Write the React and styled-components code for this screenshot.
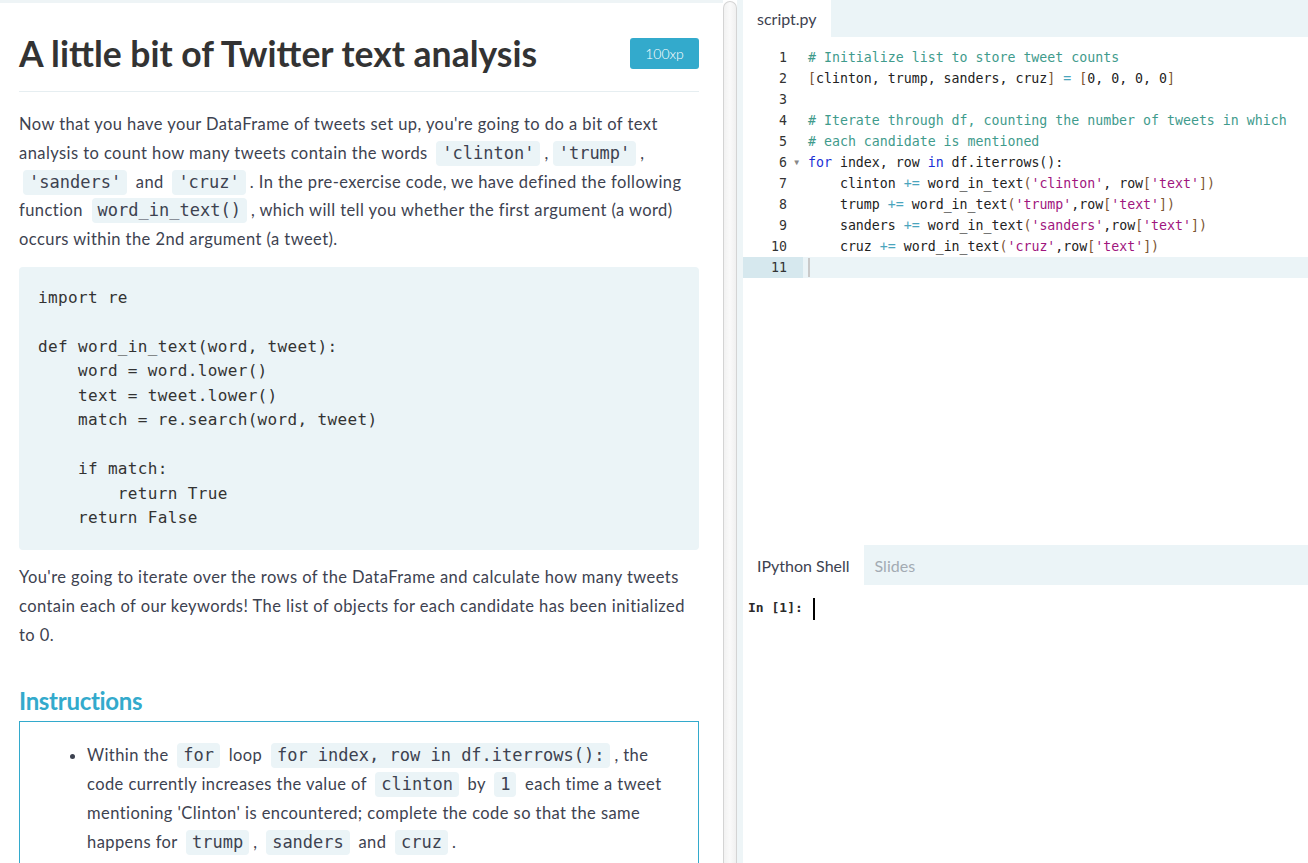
import React from "react";
import styled, { createGlobalStyle } from "styled-components";

const GlobalStyle = createGlobalStyle`
  html, body {
    margin: 0;
    padding: 0;
    overflow: hidden;
  }
  body {
    font-family: Lato, "Open Sans", sans-serif;
    color: #3d4250;
  }
`;

const Page = styled.div`
  display: flex;
  height: 863px;
  width: 1308px;
  overflow: hidden;
  background: #fff;
`;

const LeftPane = styled.div`
  flex: none;
  width: 723px;
  box-sizing: border-box;
  padding: 0 24px 0 19px;
  border-top: 3px solid #eef4f6;
  overflow: hidden;
`;

const HeaderRow = styled.div`
  display: flex;
  align-items: center;
  justify-content: space-between;
  height: 76px;
  padding-top: 12px;
  border-bottom: 1px solid #e6eef1;
`;

const Title = styled.h1`
  margin: 0;
  font-family: Lato, sans-serif;
  font-weight: 700;
  font-size: 35.5px;
  letter-spacing: 0;
  color: #333;
`;

const Badge = styled.span`
  display: inline-flex;
  align-items: center;
  justify-content: center;
  width: 69px;
  height: 31px;
  border-radius: 3px;
  background: #33aacc;
  color: #fff;
  font-size: 14px;
  font-weight: 300;
`;

const Para = styled.p`
  margin: ${(p) => (p.$first ? "18px" : "13px")} 0 0;
  font-size: 16.5px;
  line-height: 28.8px;
  letter-spacing: 0.43px;
`;

const Code = styled.code`
  display: inline-block;
  font-family: "DejaVu Sans Mono", monospace;
  font-size: 17px;
  line-height: 19px;
  letter-spacing: 0;
  background: #ebf4f7;
  border-radius: 4px;
  padding: 3px 6px;
  margin: 0 4px;
  color: #3d4250;
`;

const CodeBlock = styled.pre`
  margin: 13px 0 0;
  padding: 19px 19px;
  background: #ebf4f7;
  border-radius: 4px;
  font-family: "DejaVu Sans Mono", monospace;
  font-size: 16px;
  letter-spacing: 0.35px;
  line-height: 24.5px;
  color: #333;
`;

const SectionTitle = styled.h2`
  margin: 37px 0 6px;
  font-size: 24px;
  line-height: 29px;
  font-weight: 700;
  letter-spacing: -0.3px;
  color: #33aacc;
`;

const InstructionBox = styled.div`
  border: 1px solid #33aacc;
  padding: 19px 20px 20px 0;
`;

const Bullets = styled.ul`
  margin: 0;
  padding-left: 67px;
  font-size: 16.5px;
  line-height: 28.8px;
  letter-spacing: 0.43px;
`;

const Splitter = styled.div`
  flex: none;
  width: 12px;
  margin-top: 1px;
  border: 1px solid #d4d4d4;
  border-bottom: none;
  border-radius: 7px 7px 0 0;
  background: linear-gradient(to right, #f2f2f2, #fafafa 50%, #f0f0f0);
`;

const Gutter = styled.div`
  flex: none;
  width: 6px;
  background: #eef5f7;
`;

const RightPane = styled.div`
  flex: 1;
  display: flex;
  flex-direction: column;
  min-width: 0;
`;

const TabBar = styled.div`
  display: flex;
  height: ${(p) => p.$h}px;
  flex: none;
  background: #ebf4f7;
`;

const Tab = styled.div`
  display: flex;
  align-items: center;
  padding: 0 ${(p) => (p.$active ? "14px" : "11px")};
  background: ${(p) => (p.$active ? "#fff" : "transparent")};
  color: ${(p) => (p.$active ? "#3d4250" : "#a3abb3")};
  font-size: 16px;
`;

const Editor = styled.div`
  flex: none;
  height: 498px;
  padding-top: 10px;
  font-family: "DejaVu Sans Mono", monospace;
  font-size: 13.25px;
  line-height: 21px;
  color: #222;
`;

const Line = styled.div`
  display: flex;
  height: 21px;
  background: ${(p) => (p.$active ? "#ebf4f7" : "transparent")};
`;

const LineNo = styled.div`
  position: relative;
  flex: none;
  width: 44px;
  padding-right: 16px;
  text-align: right;
  color: #333;
  background: ${(p) => (p.$active ? "#d6e8ee" : "transparent")};
`;

const Fold = styled.span`
  position: absolute;
  right: 4px;
  top: 0;
  font-size: 8px;
  color: #888;
`;

const LineText = styled.div`
  padding-left: 5px;
  white-space: pre;
  display: flex;
  align-items: center;
`;

const Caret = styled.span`
  display: inline-block;
  width: ${(p) => p.$w}px;
  height: ${(p) => p.$h}px;
  background: ${(p) => p.$color};
`;

const tokenColors = {
  c: "#3f9b8c",
  k: "#1b2fd6",
  o: "#4aa5bd",
  s: "#a0157e",
  b: "#7a5433",
  t: "#222",
};

const Token = styled.span`
  color: ${(p) => tokenColors[p.$kind]};
`;

const Console = styled.div`
  flex: 1;
  padding: 13px 5px;
  display: flex;
  align-items: flex-start;
  font-family: "DejaVu Sans Mono", monospace;
  font-size: 13px;
  font-weight: 700;
  color: #2a2a2a;
`;

const Prompt = styled.span`
  line-height: 20px;
  white-space: pre;
  margin-right: 2px;
`;

const editorLines = [
  [["c", "# Initialize list to store tweet counts"]],
  [["b", "["], ["t", "clinton, trump, sanders, cruz"], ["b", "]"], ["t", " "], ["o", "="], ["t", " "], ["b", "["], ["t", "0, 0, 0, 0"], ["b", "]"]],
  [],
  [["c", "# Iterate through df, counting the number of tweets in which"]],
  [["c", "# each candidate is mentioned"]],
  [["k", "for"], ["t", " index, row "], ["k", "in"], ["t", " df.iterrows():"]],
  [["t", "    clinton "], ["o", "+="], ["t", " word_in_text"], ["b", "("], ["s", "'clinton'"], ["t", ", row"], ["b", "["], ["s", "'text'"], ["b", "])"]],
  [["t", "    trump "], ["o", "+="], ["t", " word_in_text"], ["b", "("], ["s", "'trump'"], ["t", ",row"], ["b", "["], ["s", "'text'"], ["b", "])"]],
  [["t", "    sanders "], ["o", "+="], ["t", " word_in_text"], ["b", "("], ["s", "'sanders'"], ["t", ",row"], ["b", "["], ["s", "'text'"], ["b", "])"]],
  [["t", "    cruz "], ["o", "+="], ["t", " word_in_text"], ["b", "("], ["s", "'cruz'"], ["t", ",row"], ["b", "["], ["s", "'text'"], ["b", "])"]],
  [],
];

const snippet = `import re

def word_in_text(word, tweet):
    word = word.lower()
    text = tweet.lower()
    match = re.search(word, tweet)

    if match:
        return True
    return False`;

export default function App() {
  return (
    <Page>
      <GlobalStyle />
      <LeftPane>
        <HeaderRow>
          <Title>A little bit of Twitter text analysis</Title>
          <Badge>100xp</Badge>
        </HeaderRow>

        <Para $first>
          Now that you have your DataFrame of tweets set up, you're going to do a bit of text
          analysis to count how many tweets contain the words <Code>'clinton'</Code>,
          <Code>'trump'</Code>, <Code>'sanders'</Code> and <Code>'cruz'</Code>. In the
          pre-exercise code, we have defined the following function <Code>word_in_text()</Code>,
          which will tell you whether the first argument (a word) occurs within the 2nd argument
          (a tweet).
        </Para>

        <CodeBlock>{snippet}</CodeBlock>

        <Para>
          You're going to iterate over the rows of the DataFrame and calculate how many tweets
          contain each of our keywords! The list of objects for each candidate has been
          initialized to 0.
        </Para>

        <SectionTitle>Instructions</SectionTitle>
        <InstructionBox>
          <Bullets>
            <li>
              Within the <Code>for</Code> loop <Code>for index, row in df.iterrows():</Code>, the
              code currently increases the value of <Code>clinton</Code> by <Code>1</Code> each
              time a tweet mentioning 'Clinton' is encountered; complete the code so that the same
              happens for <Code>trump</Code>, <Code>sanders</Code> and <Code>cruz</Code>.
            </li>
          </Bullets>
        </InstructionBox>
      </LeftPane>

      <Splitter />
      <Gutter />

      <RightPane>
        <TabBar $h={37}>
          <Tab $active>script.py</Tab>
        </TabBar>
        <Editor>
          {editorLines.map((tokens, i) => {
            const active = i === editorLines.length - 1;
            return (
              <Line key={i} $active={active}>
                <LineNo $active={active}>
                  {i + 1}
                  {i === 5 && <Fold>▼</Fold>}
                </LineNo>
                <LineText>
                  {tokens.map(([kind, text], j) => (
                    <Token key={j} $kind={kind}>
                      {text}
                    </Token>
                  ))}
                  {active && <Caret $w={2} $h={19} $color="#c9c9c9" />}
                </LineText>
              </Line>
            );
          })}
        </Editor>
        <TabBar $h={40}>
          <Tab $active>IPython Shell</Tab>
          <Tab>Slides</Tab>
        </TabBar>
        <Console>
          <Prompt>In [1]: </Prompt>
          <Caret $w={2} $h={22} $color="#000" />
        </Console>
      </RightPane>
    </Page>
  );
}
